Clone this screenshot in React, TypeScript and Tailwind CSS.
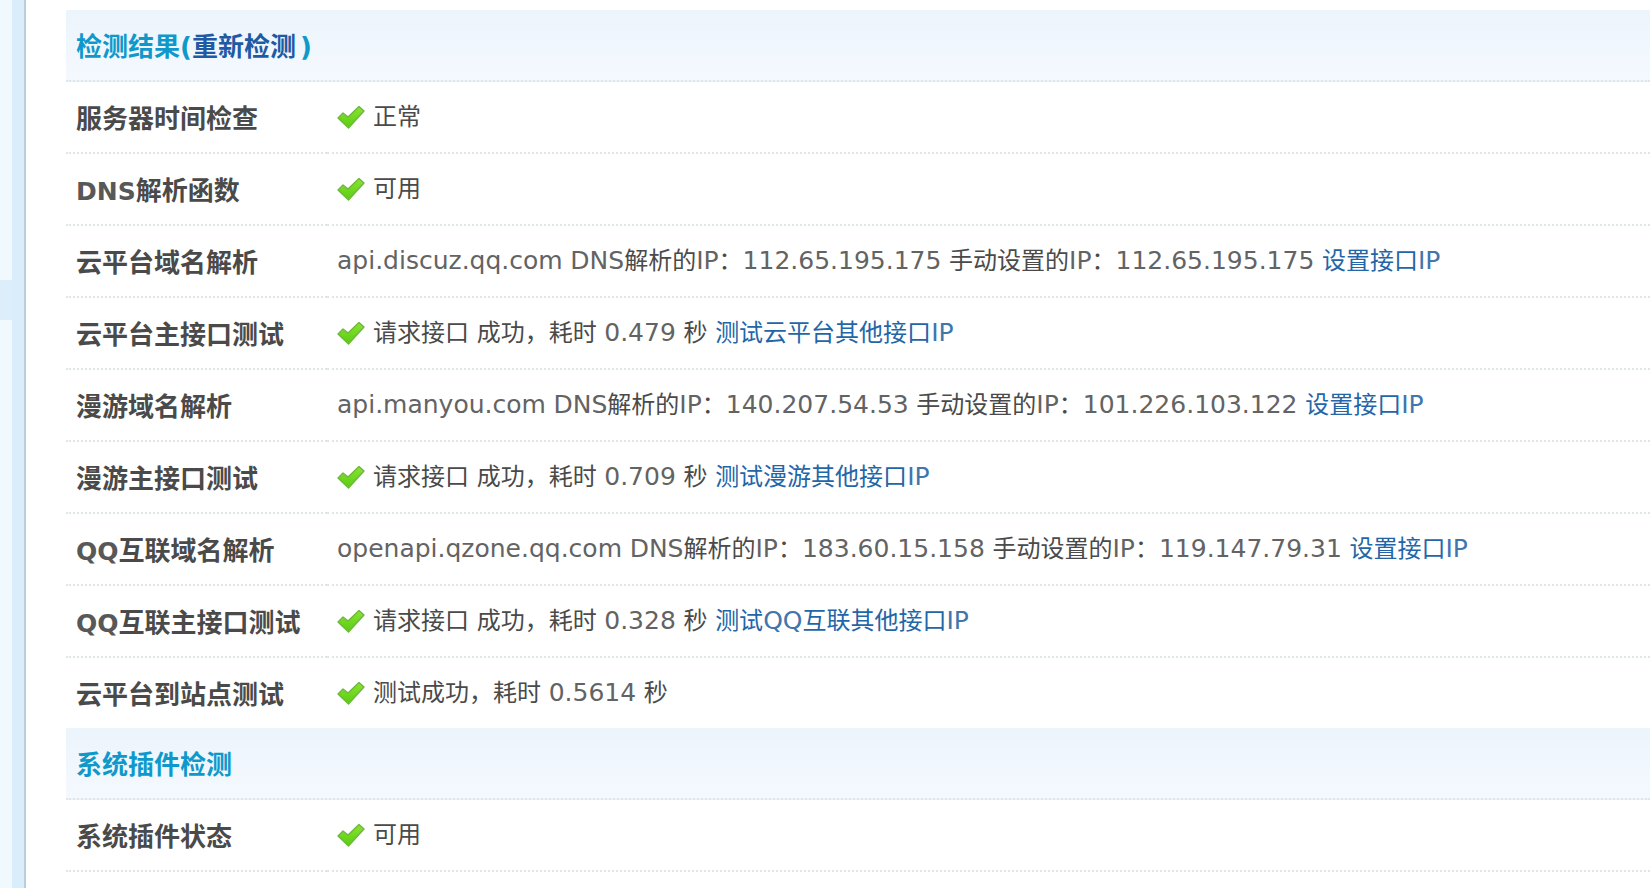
import type { ReactNode } from "react";

const setIp = "设置接口IP";

type Row = { label: string; ok?: boolean; text: string; link?: string };

const results: Row[] = [
  { label: "服务器时间检查", ok: true, text: "正常" },
  { label: "DNS解析函数", ok: true, text: "可用" },
  {
    label: "云平台域名解析",
    text: "api.discuz.qq.com DNS解析的IP：112.65.195.175 手动设置的IP：112.65.195.175",
    link: setIp,
  },
  { label: "云平台主接口测试", ok: true, text: "请求接口 成功，耗时 0.479 秒", link: "测试云平台其他接口IP" },
  {
    label: "漫游域名解析",
    text: "api.manyou.com DNS解析的IP：140.207.54.53 手动设置的IP：101.226.103.122",
    link: setIp,
  },
  { label: "漫游主接口测试", ok: true, text: "请求接口 成功，耗时 0.709 秒", link: "测试漫游其他接口IP" },
  {
    label: "QQ互联域名解析",
    text: "openapi.qzone.qq.com DNS解析的IP：183.60.15.158 手动设置的IP：119.147.79.31",
    link: setIp,
  },
  { label: "QQ互联主接口测试", ok: true, text: "请求接口 成功，耗时 0.328 秒", link: "测试QQ互联其他接口IP" },
  { label: "云平台到站点测试", ok: true, text: "测试成功，耗时 0.5614 秒" },
];

const plugins: Row[] = [{ label: "系统插件状态", ok: true, text: "可用" }];

// Latin runs are set a little differently from the Chinese around them
function Mixed({ text, latin }: { text: string; latin: string }) {
  return text.split(/([\x21-\x7e]+)/).map((part, i) =>
    i % 2 ? (
      <span key={i} className={latin}>
        {part}
      </span>
    ) : (
      part
    )
  );
}

function CheckIcon() {
  return (
    <svg width="28" height="24" viewBox="0 0 28 24" className="mr-2 shrink-0" aria-hidden="true">
      <defs>
        <linearGradient id="tick" x1="0" y1="0" x2="0" y2="1">
          <stop offset="0" stopColor="#8be32f" />
          <stop offset="1" stopColor="#58cc10" />
        </linearGradient>
      </defs>
      <path
        d="M1 13 L6 8 L11 12 L22 1.5 L27 6 L11.5 23 Z"
        fill="url(#tick)"
        stroke="#6fb644"
        strokeWidth="1.4"
        strokeLinejoin="round"
      />
    </svg>
  );
}

function SectionHead({ children }: { children: ReactNode }) {
  return (
    <tr className="h-18">
      <th
        colSpan={2}
        scope="colgroup"
        className="border-b-2 border-dotted border-[#dfe6ea] bg-linear-to-b from-[#ecf4fc] to-[#f4f9fe] px-2.5 pt-1 text-left text-[26px] leading-8 font-bold text-[#0f99cb]"
      >
        {children}
      </th>
    </tr>
  );
}

function ResultRow({ row, last }: { row: Row; last?: boolean }) {
  const line = last ? "" : "border-b-2 border-dotted border-[#dfe6ea]";
  return (
    <tr className={last ? "h-[70px]" : "h-18"}>
      <th scope="row" className={`px-2.5 pt-1 text-left text-[26px] leading-8 font-bold whitespace-nowrap ${line}`}>
        <Mixed text={row.label} latin="text-[25px] leading-8 text-[#585858]" />
      </th>
      <td className={`px-2.5 text-2xl whitespace-nowrap ${line}`}>
        <div className="flex items-center">
          {row.ok && <CheckIcon />}
          <span>
            <Mixed text={row.text} latin="text-[25px] text-[#636363]" />
            {row.link && (
              <>
                {" "}
                <a href="#" className="text-[#2366a8]">
                  <Mixed text={row.link} latin="text-[25px] text-[#4275ac]" />
                </a>
              </>
            )}
          </span>
        </div>
      </td>
    </tr>
  );
}

export default function App() {
  return (
    <div className="flex min-h-screen overflow-hidden bg-white font-['DejaVu_Sans','Noto_Sans_CJK_SC',sans-serif] text-[#4a4a4a]">
      <aside className="flex w-[26px] shrink-0 border-r-2 border-[#b9cddb] bg-[#d9edfa]">
        <div className="w-3 bg-[#f0f9fe] pt-[280px]">
          <div className="h-10 bg-[#dceefa]" />
        </div>
      </aside>
      <main className="min-w-0 flex-1 pt-2.5 pl-10">
        <table className="w-full table-fixed border-separate border-spacing-0">
          <colgroup>
            <col className="w-[261px]" />
            <col />
          </colgroup>
          <tbody>
            <SectionHead>
              检测结果(
              <a href="#" className="mr-1 text-[#1f5aa5]">
                重新检测
              </a>
              )
            </SectionHead>
            {results.map((row, i) => (
              <ResultRow key={row.label} row={row} last={i === results.length - 1} />
            ))}
            <SectionHead>系统插件检测</SectionHead>
            {plugins.map((row) => (
              <ResultRow key={row.label} row={row} />
            ))}
          </tbody>
        </table>
      </main>
    </div>
  );
}
